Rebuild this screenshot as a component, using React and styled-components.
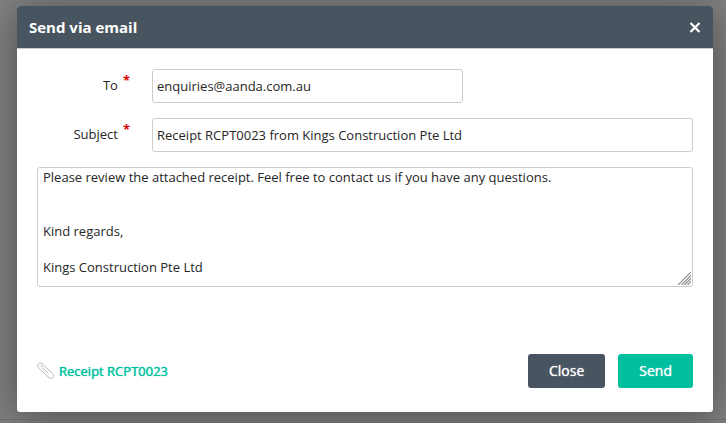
import React, { useState } from "react";
import styled, { createGlobalStyle } from "styled-components";

const GlobalStyle = createGlobalStyle`
  * { box-sizing: border-box; }
  body {
    margin: 0;
    background: #808080;
    color: #262626;
    font: 13px/18px "Open Sans", "Noto Sans", sans-serif;
  }
  button, input, textarea { font: inherit; color: inherit; }
`;

const Backdrop = styled.div`
  display: flex;
  flex-direction: column;
  min-height: 100vh;
  overflow: hidden;
  padding-top: 6px;
`;

const PageRule = styled.hr`
  width: 100%;
  margin: 7px 0 0;
  border: 0;
  border-top: 1px solid #6b6b6b;
`;

const Dialog = styled.section`
  margin: 0 13px 0 17px;
  background: #fff;
  border-radius: 3px;
  box-shadow: 0 5px 40px rgba(0, 0, 0, 0.4);
`;

const Header = styled.header`
  display: flex;
  align-items: center;
  justify-content: space-between;
  height: 43px;
  padding: 0 12px;
  color: #fff;
  background: #48545f;
  border-bottom: 1px solid #ccc;
  border-radius: 3px 3px 0 0;
`;

const Title = styled.h1`
  margin: 0;
  font-size: 15px;
  line-height: 20px;
  font-weight: 700;
`;

const Dismiss = styled.button`
  display: flex;
  padding: 0;
  color: #fff;
  background: none;
  border: 0;
  cursor: pointer;
`;

const Form = styled.form`
  padding: 20px 20px 24px;
`;

const Field = styled.div`
  display: grid;
  grid-template-columns: 93px 1fr;
  column-gap: 22px;
  margin-bottom: 15px;
`;

const Label = styled.label`
  display: flex;
  justify-content: flex-end;
  gap: 5px;
  padding-top: 7px;
`;

const Required = styled.span`
  color: #e00000;
  font-size: 13px;
  line-height: 8px;
  font-weight: 700;
`;

const TextInput = styled.input`
  width: ${({ $width }) => $width};
  height: 34px;
  padding: 0 4px;
  background: #fff;
  border: 1px solid #ccc;
  border-radius: 3px;
`;

const MessageFrame = styled.div`
  position: relative;
`;

const Message = styled.textarea`
  display: block;
  width: 100%;
  height: 120px;
  padding: 0 5px;
  line-height: 18px;
  background: #fff;
  border: 1px solid #ccc;
  border-radius: 3px;
  resize: none;
`;

const Grip = styled.svg`
  position: absolute;
  right: 2px;
  bottom: 2px;
  pointer-events: none;
`;

const Footer = styled.footer`
  display: flex;
  align-items: center;
  justify-content: space-between;
  margin-top: 67px;
`;

const Attachment = styled.a`
  display: flex;
  align-items: center;
  gap: 4px;
  color: #00bf9f;
  text-shadow: 0 0 1px currentColor;
  text-decoration: none;
`;

const Actions = styled.div`
  display: flex;
  gap: 13px;
`;

const Button = styled.button`
  height: 34px;
  padding: 0 21px;
  color: #fff;
  font-size: 14px;
  text-shadow: 0 0 1px currentColor;
  background: ${({ $primary }) => ($primary ? "#00bf9f" : "#48545f")};
  border: 0;
  border-radius: 3px;
  cursor: pointer;
`;

const CloseIcon = () => (
  <svg width="12" height="12" viewBox="0 0 12 12" aria-hidden="true">
    <path d="M1.5 2l9 9M10.5 2l-9 9" stroke="currentColor" strokeWidth="2.2" />
  </svg>
);

const ClipIcon = () => (
  <svg width="18" height="18" viewBox="0 0 18 18" fill="none" stroke="#b8b8b8" aria-hidden="true">
    <path
      d="M11.2 11.2L4.8 5.2C3.4 3.8 5.3 2 6.8 3.4L15.8 11.6C18.6 14.2 14.8 18.2 12 15.6L1.8 6.2C-1 3.5 2.4-.8 5.4 1.6"
      strokeLinecap="round"
    />
  </svg>
);

export default function App() {
  const [to, setTo] = useState("enquiries@aanda.com.au");
  const [subject, setSubject] = useState("Receipt RCPT0023 from Kings Construction Pte Ltd");
  const [message, setMessage] = useState(
    "Please review the attached receipt. Feel free to contact us if you have any questions.\n\n\nKind regards,\n\nKings Construction Pte Ltd"
  );

  return (
    <>
      <GlobalStyle />
      <Backdrop>
        <Dialog role="dialog" aria-modal="true" aria-labelledby="dialog-title">
          <Header>
            <Title id="dialog-title">Send via email</Title>
            <Dismiss type="button" aria-label="Dismiss">
              <CloseIcon />
            </Dismiss>
          </Header>
          <Form onSubmit={(e) => e.preventDefault()}>
            <Field>
              <Label htmlFor="to">
                To <Required aria-hidden="true">*</Required>
              </Label>
              <TextInput id="to" type="email" required $width="57.5%" value={to} onChange={(e) => setTo(e.target.value)} />
            </Field>
            <Field>
              <Label htmlFor="subject">
                Subject <Required aria-hidden="true">*</Required>
              </Label>
              <TextInput id="subject" type="text" required $width="100%" value={subject} onChange={(e) => setSubject(e.target.value)} />
            </Field>
            <MessageFrame>
              <Message aria-label="Message" value={message} onChange={(e) => setMessage(e.target.value)} />
              <Grip width="13" height="13" viewBox="0 0 13 13" stroke="#888" aria-hidden="true">
                <path d="M0 13L13 0M3.5 13L13 3.5M6.5 13L13 6.5M9.5 13L13 9.5" strokeWidth="1.1" />
              </Grip>
            </MessageFrame>
            <Footer>
              <Attachment href="#receipt">
                <ClipIcon />
                Receipt RCPT0023
              </Attachment>
              <Actions>
                <Button type="button">Close</Button>
                <Button type="submit" $primary>
                  Send
                </Button>
              </Actions>
            </Footer>
          </Form>
        </Dialog>
        <PageRule />
      </Backdrop>
    </>
  );
}
